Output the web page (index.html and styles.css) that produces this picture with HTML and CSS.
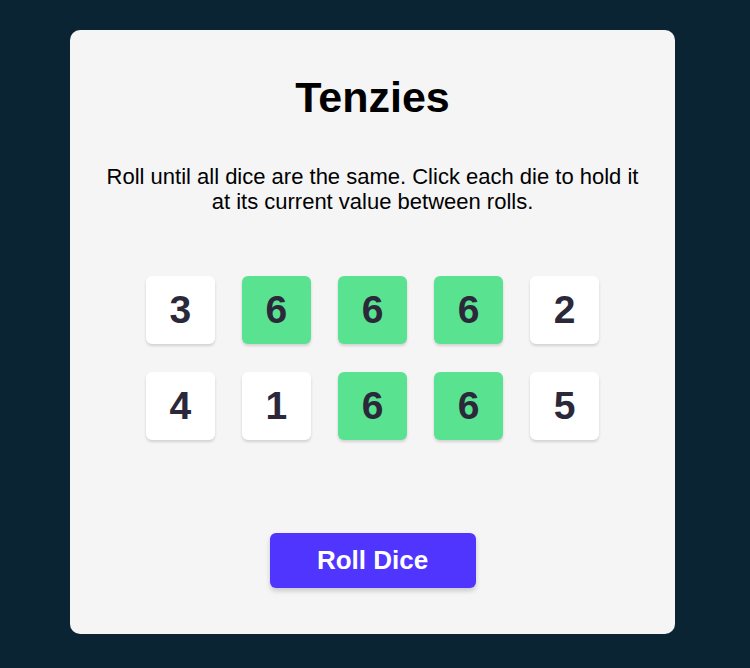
FILE: index.html
```html
<!DOCTYPE html>
<html lang="en">
<head>
<meta charset="utf-8">
<title>Tenzies</title>
<link rel="stylesheet" href="styles.css">
</head>
<body>
<main class="card">
  <h1 class="title">Tenzies</h1>
  <p class="instructions">Roll until all dice are the same. Click each die to hold it at its current value between rolls.</p>
  <div class="dice">
    <button class="die">3</button>
    <button class="die held">6</button>
    <button class="die held">6</button>
    <button class="die held">6</button>
    <button class="die">2</button>
    <button class="die">4</button>
    <button class="die">1</button>
    <button class="die held">6</button>
    <button class="die held">6</button>
    <button class="die">5</button>
  </div>
  <button class="roll">Roll Dice</button>
</main>
</body>
</html>
```
FILE: styles.css
```css
html, body {
  margin: 0;
  padding: 0;
}
body {
  background: #0B2434;
  font-family: "Liberation Sans", Arial, sans-serif;
  display: flex;
  justify-content: flex-start;
  padding: 30px 0 0 70px;
  height: 668px;
  box-sizing: border-box;
}
.card {
  width: 605px;
  height: 604px;
  background: #F5F5F5;
  border-radius: 10px;
  display: flex;
  flex-direction: column;
  align-items: center;
  box-sizing: border-box;
  padding-top: 43px;
}
.title {
  margin: 0;
  font-size: 43px;
  line-height: 48px;
  font-weight: 700;
  color: #000;
}
.instructions {
  margin: 43px 0 0;
  width: 540px;
  text-align: center;
  font-size: 22px;
  line-height: 25px;
  color: #000;
}
.dice {
  margin-top: 62px;
  display: grid;
  grid-template-columns: repeat(5, 68.6px);
  grid-auto-rows: 68px;
  column-gap: 27.5px;
  row-gap: 28px;
}
.die {
  border: none;
  margin: 0;
  padding: 0;
  background: #FFFFFF;
  border-radius: 6px;
  box-shadow: 0 2px 3px rgba(0, 0, 0, 0.15);
  font-family: "Liberation Sans", Arial, sans-serif;
  font-weight: 700;
  font-size: 39px;
  color: #2B283A;
  display: flex;
  align-items: center;
  justify-content: center;
  cursor: pointer;
}
.die.held {
  background: #59E391;
}
.roll {
  margin-top: 93px;
  width: 206px;
  height: 55px;
  border: none;
  border-radius: 6px;
  background: #5035FF;
  color: #FFFFFF;
  font-family: "Liberation Sans", Arial, sans-serif;
  font-weight: 700;
  font-size: 26px;
  box-shadow: 0 3px 5px rgba(0, 0, 0, 0.18);
  cursor: pointer;
}
```
